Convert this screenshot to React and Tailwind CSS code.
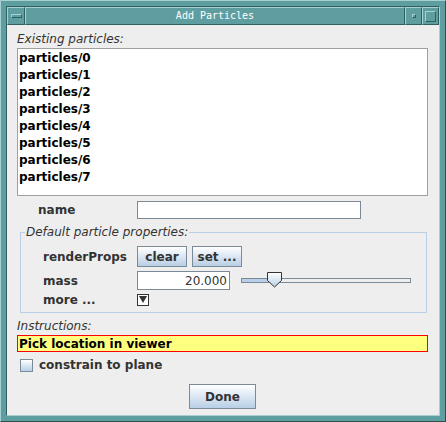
import React, { useState } from 'react'

const particles = [0, 1, 2, 3, 4, 5, 6, 7].map((i) => `particles/${i}`)

const body = "font-['DejaVu_Sans',sans-serif]"

function OceanButton({ label, className }) {
  return (
    <button
      type="button"
      className={`flex items-center justify-center border border-[#7a8a99] bg-gradient-to-b from-[#ffffff] to-[#b8cfe5] text-[12px] font-bold text-[#333333] ${className}`}
    >
      {label}
    </button>
  )
}

function Slider({ value }) {
  return (
    <div className="relative flex h-[19px] w-[170px] items-center">
      <div className="flex h-[5px] w-full border border-[#7a8a99] bg-[#eeeeee]">
        <div className="h-full bg-[#b8cfe5]" style={{ width: `${value}%` }} />
      </div>
      <svg className="absolute top-[1px]" style={{ left: `${value - 4}%` }} width="15" height="16" viewBox="0 0 15 16">
        <defs>
          <linearGradient id="thumb" x1="0" y1="0" x2="0" y2="1">
            <stop offset="0" stopColor="#ffffff" />
            <stop offset="1" stopColor="#b8cfe5" />
          </linearGradient>
        </defs>
        <path d="M0.5 0.5 H14.5 V8.5 L7.5 15 L0.5 8.5 Z" fill="url(#thumb)" stroke="#333333" />
      </svg>
    </div>
  )
}

function TitleBox({ children, className }) {
  return (
    <div
      className={`flex items-center justify-center border-t border-l border-[#a6d0d1] border-r-[#2f5f60] border-b-[#2f5f60] border-r border-b bg-[#5f9ea0] ${className}`}
    >
      {children}
    </div>
  )
}

export default function App() {
  const [checked, setChecked] = useState(false)

  return (
    <div className="h-[422px] w-[446px] border-t border-l border-[#a6d0d1] border-r-[#2f4f4f] border-b-[#2f4f4f] border-r border-b bg-[#5f9ea0] p-[5px]">
      <div className="flex h-full w-full flex-col border-t border-l border-[#2f5f60] border-r-[#a6d0d1] border-b-[#a6d0d1] border-r border-b">
        <div className="flex h-[18px] shrink-0">
          <TitleBox className="w-[18px]">
            <div className="h-[4px] w-[11px] border-t border-l border-[#a6d0d1] border-r-[#2f5f60] border-b-[#2f5f60] border-r border-b" />
          </TitleBox>
          <TitleBox className="flex-1">
            <span className="font-['DejaVu_Sans_Mono',monospace] text-[10px] leading-none text-white">Add Particles</span>
          </TitleBox>
          <TitleBox className="w-[17px]">
            <div className="h-[4px] w-[4px] border-t border-l border-[#a6d0d1] border-r-[#2f5f60] border-b-[#2f5f60] border-r border-b" />
          </TitleBox>
          <TitleBox className="w-[17px]">
            <div className="h-[11px] w-[11px] border-t border-l border-[#a6d0d1] border-r-[#2f5f60] border-b-[#2f5f60] border-r border-b" />
          </TitleBox>
        </div>

        <div className={`flex flex-1 flex-col bg-[#eeeeee] pl-[10px] pr-[11px] ${body} text-[#333333]`}>
          <div className="mt-[5px] h-[18px] text-[12px] italic leading-[18px]">Existing particles:</div>
          <div className="h-[148px] border border-[#a0a0a0] bg-white pt-[1px]">
            {particles.map((p) => (
              <div key={p} className="h-[17px] pl-[1px] text-[12px] font-bold leading-[17px] text-black">
                {p}
              </div>
            ))}
          </div>

          <div className="mt-[5px] flex h-[18px] items-center">
            <span className="w-[120px] pl-[21px] text-[12px] font-bold">name</span>
            <div className="h-[18px] w-[224px] border border-[#7a8a99] bg-white" />
          </div>

          <div className="relative mt-[13px] ml-[3px] mr-[1px] h-[81px] border border-[#b8cfe5] pt-[13px] pl-[22px]">
            <span className="absolute -top-[9px] left-[4px] bg-[#eeeeee] px-[1px] text-[12px] italic leading-[16px]">
              Default particle properties:
            </span>
            <div className="flex h-[21px] items-center">
              <span className="w-[94px] text-[12px] font-bold">renderProps</span>
              <div className="flex gap-[5px]">
                <OceanButton label="clear" className="h-[21px] w-[50px]" />
                <OceanButton label="set ..." className="h-[21px] w-[50px]" />
              </div>
            </div>
            <div className="mt-[4px] flex h-[19px] items-center">
              <span className="w-[94px] text-[12px] font-bold">mass</span>
              <div className="flex h-[19px] w-[93px] items-center justify-end border border-[#7a8a99] bg-white pr-[2px] text-[12px]">
                20.000
              </div>
              <div className="ml-[11px]">
                <Slider value={19} />
              </div>
            </div>
            <div className="mt-[3px] flex h-[13px] items-center">
              <span className="w-[94px] text-[12px] font-bold">more ...</span>
              <div className="flex h-[12px] w-[12px] items-center justify-center border border-[#333333] bg-white">
                <svg width="8" height="7" viewBox="0 0 8 7">
                  <path d="M0 0 H8 L4 7 Z" fill="#333333" />
                </svg>
              </div>
            </div>
          </div>

          <div className="mt-[5px] h-[16px] text-[12px] italic leading-[16px]">Instructions:</div>
          <div className="mt-[1px] flex h-[17px] items-center border border-[#ff0000] bg-[#ffff80] pl-[1px] text-[12px] font-bold text-black">
            Pick location in viewer
          </div>

          <label className="mt-[6px] ml-[3px] flex h-[14px] cursor-pointer items-center gap-[6px]">
            <span
              onClick={() => setChecked(!checked)}
              className="flex h-[13px] w-[13px] items-center justify-center border border-[#7a8a99] bg-gradient-to-b from-[#ffffff] to-[#b8cfe5] text-[10px] leading-none"
            >
              {checked ? '✓' : ''}
            </span>
            <span className="text-[12px] font-bold">constrain to plane</span>
          </label>

          <div className="mt-[12px] flex justify-center">
            <OceanButton label="Done" className="h-[25px] w-[67px]" />
          </div>
        </div>
      </div>
    </div>
  )
}
